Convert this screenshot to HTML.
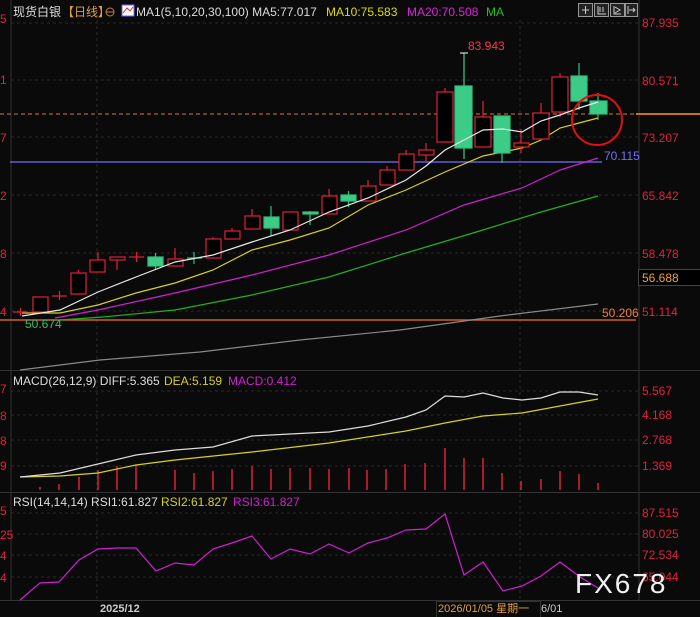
<!DOCTYPE html>
<html><head><meta charset="utf-8"><style>
html,body{margin:0;padding:0;background:#0a0a0a;}
svg{display:block;font-family:"Liberation Sans","Noto Sans CJK SC",sans-serif;}
</style></head><body>
<svg width="700" height="617" viewBox="0 0 700 617" xmlns="http://www.w3.org/2000/svg">
<rect width="700" height="617" fill="#0a0a0a"/>
<line x1="11" y1="0" x2="11" y2="600" stroke="#333" stroke-width="1"/>
<line x1="639" y1="0" x2="639" y2="600" stroke="#333" stroke-width="1"/>
<line x1="0" y1="370.5" x2="700" y2="370.5" stroke="#333"/>
<line x1="0" y1="492.5" x2="700" y2="492.5" stroke="#333"/>
<line x1="0" y1="600.5" x2="700" y2="600.5" stroke="#333"/>
<g stroke="#2a2a2a" stroke-dasharray="3,3">
<line x1="11" y1="23" x2="639" y2="23"/><line x1="11" y1="80" x2="639" y2="80"/><line x1="11" y1="137" x2="639" y2="137"/><line x1="11" y1="195" x2="639" y2="195"/><line x1="11" y1="253" x2="639" y2="253"/><line x1="11" y1="311" x2="639" y2="311"/>
<line x1="11" y1="391" x2="639" y2="391"/><line x1="11" y1="415" x2="639" y2="415"/><line x1="11" y1="440" x2="639" y2="440"/><line x1="11" y1="466" x2="639" y2="466"/>
<line x1="11" y1="513" x2="639" y2="513"/><line x1="11" y1="534" x2="639" y2="534"/><line x1="11" y1="555" x2="639" y2="555"/><line x1="11" y1="577" x2="639" y2="577"/>
<line x1="97" y1="20" x2="97" y2="600"/><line x1="520" y1="20" x2="520" y2="600"/>
</g>
<text x="13" y="16" font-size="12" fill="#ddd">现货白银</text>
<text x="62" y="16" font-size="12" fill="#e0a040">【日线】</text>
<circle cx="110" cy="12" r="4" fill="none" stroke="#c08030"/><line x1="106" y1="12" x2="114" y2="12" stroke="#c08030"/>
<rect x="122" y="5" width="12" height="11" fill="#fff" stroke="#66f"/><path d="M123 13 L127 8 L130 11 L133 7" stroke="#e22" fill="none"/>
<text x="136" y="16" font-size="12" fill="#ddd">MA1(5,10,20,30,100)  MA5:77.017</text>
<text x="326" y="16" font-size="12" fill="#dd0">MA10:75.583</text>
<text x="407" y="16" font-size="12" fill="#e020e0">MA20:70.508</text>
<text x="486" y="16" font-size="12" fill="#20c020">MA</text>
<g fill="#222" stroke="#999"><rect x="578.5" y="3.5" width="14" height="13"/><rect x="594.5" y="3.5" width="14" height="13"/><rect x="610.5" y="3.5" width="14" height="13"/><rect x="625.5" y="3.5" width="12" height="13"/></g>
<g stroke="#ccc" fill="none"><path d="M582 10h7M585.5 6v8"/><path d="M598 6v8h8M600 7v5M603 7v5"/><path d="M614 6v8h7M615 7l5 3-5 3"/><path d="M628 6v8M629 10h6M633 8l2 2-2 2"/></g>
<g font-size="12" fill="#e02040">
<text x="0" y="23">5</text><text x="0" y="84">1</text><text x="0" y="142">7</text><text x="0" y="200">2</text><text x="0" y="258">8</text><text x="0" y="316">4</text>
<text x="0" y="393">7</text><text x="0" y="420">8</text><text x="0" y="445">8</text><text x="0" y="470">9</text>
<text x="0" y="515">5</text><text x="0" y="539">25</text><text x="0" y="560">4</text><text x="0" y="582">4</text>
</g>
<g font-size="12" fill="#e02040">
<text x="642" y="27">87.935</text><text x="642" y="85">80.571</text><text x="642" y="142">73.207</text><text x="642" y="200">65.842</text><text x="642" y="258">58.478</text><text x="642" y="316">51.114</text>
<text x="642" y="395">5.567</text><text x="642" y="419">4.168</text><text x="642" y="444">2.768</text><text x="642" y="470">1.369</text>
<text x="642" y="517">87.515</text><text x="642" y="538">80.025</text><text x="642" y="559">72.534</text><text x="642" y="581">65.044</text>
</g>
<rect x="638.5" y="269.5" width="62" height="16" fill="#000" stroke="#444"/>
<text x="642" y="282" font-size="12" fill="#f0a030">56.688</text>
<line x1="0" y1="114" x2="636" y2="114" stroke="#d08020" stroke-dasharray="4,3"/>
<line x1="636" y1="114" x2="700" y2="114" stroke="#c87020" stroke-width="2"/>
<line x1="10" y1="162" x2="602" y2="162" stroke="#6060d0" stroke-width="1.5"/>
<line x1="0" y1="320" x2="636" y2="320" stroke="#d06020" stroke-width="1.5"/>
<text x="604" y="160" font-size="12" fill="#7070ff">70.115</text>
<text x="602" y="317" font-size="12" fill="#f08030">50.206</text>
<text x="468" y="50" font-size="12" fill="#ff3050">83.943</text>
<text x="25" y="328" font-size="12" fill="#30c070">50.674</text>
<polyline fill="none" stroke="#888" stroke-width="1.2" points="20,370 100,360 200,352 300,340 400,330 500,316 598,304"/>
<polyline fill="none" stroke="#20b020" stroke-width="1.2" points="60,320 103,317 175,310 252,295 329,277 406,253 483,230 541,212 598,196"/>
<polyline fill="none" stroke="#d020d0" stroke-width="1.2" points="55,318 98,310 175,293 252,275 329,255 406,230 464,205 522,188 560,170 598,158"/>
<polyline fill="none" stroke="#d8d020" stroke-width="1.2" points="22,313 60,313 98,305 136,293 175,283 213,270 252,250 290,240 329,228 368,205 406,190 445,172 483,156 522,148 541,140 560,128 579,123 598,118"/>
<g stroke="#e0203a" fill="#000" stroke-width="1.2">
<line x1="13" y1="312" x2="28" y2="312"/><line x1="20.5" y1="308" x2="20.5" y2="316"/>
<rect x="33" y="297" width="15" height="15"/>
<line x1="52" y1="296" x2="67" y2="296"/><line x1="59.5" y1="291" x2="59.5" y2="300"/>
<line x1="78.5" y1="270" x2="78.5" y2="274"/><rect x="71" y="273" width="15" height="21"/>
<line x1="98" y1="252" x2="98" y2="260"/><rect x="90" y="260" width="15" height="12"/>
<rect x="110" y="257" width="15" height="3"/><line x1="117" y1="260" x2="117" y2="270"/>
<line x1="129" y1="257" x2="144" y2="257"/><line x1="136.5" y1="252" x2="136.5" y2="262"/>
<line x1="175" y1="248" x2="175" y2="259"/><rect x="168" y="259" width="15" height="7"/>
<line x1="213" y1="237" x2="213" y2="239"/><rect x="206" y="239" width="15" height="19"/>
<line x1="232" y1="228" x2="232" y2="231"/><rect x="225" y="231" width="15" height="8"/>
<line x1="252" y1="209" x2="252" y2="216"/><rect x="245" y="216" width="15" height="13"/>
<rect x="283" y="212" width="15" height="18"/>
<line x1="329" y1="189" x2="329" y2="196"/><rect x="322" y="196" width="15" height="18"/>
<line x1="368" y1="180" x2="368" y2="186"/><rect x="361" y="186" width="15" height="15"/>
<line x1="387" y1="166" x2="387" y2="170"/><rect x="380" y="170" width="15" height="15"/>
<line x1="406" y1="150" x2="406" y2="154"/><rect x="399" y="154" width="15" height="16"/>
<line x1="426" y1="143" x2="426" y2="162"/><rect x="419" y="150" width="15" height="5"/>
<line x1="445" y1="88" x2="445" y2="92"/><rect x="437" y="92" width="16" height="50"/>
<line x1="483" y1="101" x2="483" y2="117"/><rect x="475" y="117" width="16" height="30"/>
<line x1="521" y1="129" x2="521" y2="153"/><rect x="514" y="143" width="15" height="4"/>
<line x1="541" y1="103" x2="541" y2="140"/><rect x="533" y="113" width="16" height="26"/>
<line x1="560" y1="73" x2="560" y2="117"/><rect x="552" y="77" width="16" height="35"/>
</g>
<g stroke="#30c080" fill="#3ccc88" stroke-width="1.2">
<line x1="155.5" y1="253" x2="155.5" y2="270"/><rect x="148" y="257" width="15" height="9"/>
<line x1="187" y1="258" x2="202" y2="258"/><line x1="194" y1="252" x2="194" y2="264"/>
<line x1="271" y1="206" x2="271" y2="236"/><rect x="264" y="217" width="15" height="11"/>
<line x1="310" y1="211" x2="310" y2="225"/><rect x="303" y="212" width="15" height="2"/>
<line x1="348.5" y1="191" x2="348.5" y2="207"/><rect x="341" y="195" width="15" height="6"/>
<line x1="464" y1="53" x2="464" y2="159" stroke="#3ccc88"/><rect x="455" y="86" width="17" height="62"/>
<line x1="502" y1="116" x2="502" y2="163"/><rect x="494" y="116" width="16" height="37"/>
<line x1="579" y1="63" x2="579" y2="110"/><rect x="571" y="76" width="16" height="25"/>
<line x1="598" y1="93" x2="598" y2="120"/><rect x="590" y="101" width="17" height="13"/>
</g>
<line x1="460" y1="53" x2="468" y2="53" stroke="#fff"/>
<polyline fill="none" stroke="#e8e8e8" stroke-width="1.2" points="22,316 60,310 98,292 136,277 175,262 213,255 252,242 290,230 329,212 368,198 406,180 426,166 445,150 464,140 483,130 503,129 522,132 541,121 560,115 579,108 598,102"/>
<circle cx="597" cy="120" r="25" fill="none" stroke="#e01010" stroke-width="2"/>
<text x="13" y="385" font-size="12" fill="#ddd">MACD(26,12,9) DIFF:5.365</text>
<text x="164" y="385" font-size="12" fill="#d8d020">DEA:5.159</text>
<text x="228" y="385" font-size="12" fill="#d020d0">MACD:0.412</text>
<g stroke="#e0203a" stroke-width="1.5">
<line x1="40" y1="490" x2="40" y2="487"/><line x1="59" y1="490" x2="59" y2="484"/><line x1="79" y1="490" x2="79" y2="477"/><line x1="98" y1="490" x2="98" y2="470"/><line x1="117" y1="490" x2="117" y2="466"/><line x1="136" y1="490" x2="136" y2="465"/><line x1="175" y1="490" x2="175" y2="470"/><line x1="194" y1="490" x2="194" y2="473"/><line x1="213" y1="490" x2="213" y2="471"/><line x1="232" y1="490" x2="232" y2="469"/><line x1="252" y1="490" x2="252" y2="466"/><line x1="271" y1="490" x2="271" y2="469"/><line x1="290" y1="490" x2="290" y2="468"/><line x1="310" y1="490" x2="310" y2="468"/><line x1="329" y1="490" x2="329" y2="469"/><line x1="349" y1="490" x2="349" y2="468"/><line x1="367" y1="490" x2="367" y2="470"/><line x1="386" y1="490" x2="386" y2="469"/><line x1="405" y1="490" x2="405" y2="464"/><line x1="425" y1="490" x2="425" y2="463"/><line x1="445" y1="490" x2="445" y2="448"/><line x1="464" y1="490" x2="464" y2="458"/><line x1="483" y1="490" x2="483" y2="458"/><line x1="502" y1="490" x2="502" y2="473"/><line x1="521" y1="490" x2="521" y2="481"/><line x1="541" y1="490" x2="541" y2="479"/><line x1="560" y1="490" x2="560" y2="471"/><line x1="579" y1="490" x2="579" y2="474"/><line x1="598" y1="490" x2="598" y2="483"/>
</g>
<polyline fill="none" stroke="#d8d020" stroke-width="1.2" points="20,477 60,476 98,473 136,465 175,460 252,452 329,443 406,431 445,423 483,416 522,413 560,406 598,399"/>
<polyline fill="none" stroke="#ddd" stroke-width="1.2" points="20,477 60,473 98,464 136,455 175,450 213,447 252,436 290,434 329,432 368,426 406,417 426,410 445,396 464,397 483,393 503,398 522,400 541,398 560,392 579,392 598,395"/>
<text x="13" y="506" font-size="12" fill="#ddd">RSI(14,14,14) RSI1:61.827</text>
<text x="161" y="506" font-size="12" fill="#d8d020">RSI2:61.827</text>
<text x="233" y="506" font-size="12" fill="#d020d0">RSI3:61.827</text>
<polyline fill="none" stroke="#d020d0" stroke-width="1.2" points="20,600 40,583 59,582 79,560 98,549 117,548 136,548 156,571 175,563 194,565 213,549 232,543 252,536 271,559 290,549 310,554 329,544 349,553 368,543 387,538 406,530 426,529 445,514 464,575 483,562 503,591 522,586 541,576 560,562 580,577 598,588"/>
<text x="575" y="593" font-size="28" fill="#f0f0f0" letter-spacing="2">FX678</text>
<text x="100" y="612" font-size="11" font-weight="bold" fill="#ccc">2025/12</text>
<rect x="436.5" y="601.5" width="104" height="16" fill="#0a0a0a" stroke="#333"/>
<text x="438" y="612" font-size="11" fill="#e0a040">2026/01/05 星期一</text>
<text x="541" y="612" font-size="11" fill="#ccc">6/01</text>
</svg>
</body></html>
